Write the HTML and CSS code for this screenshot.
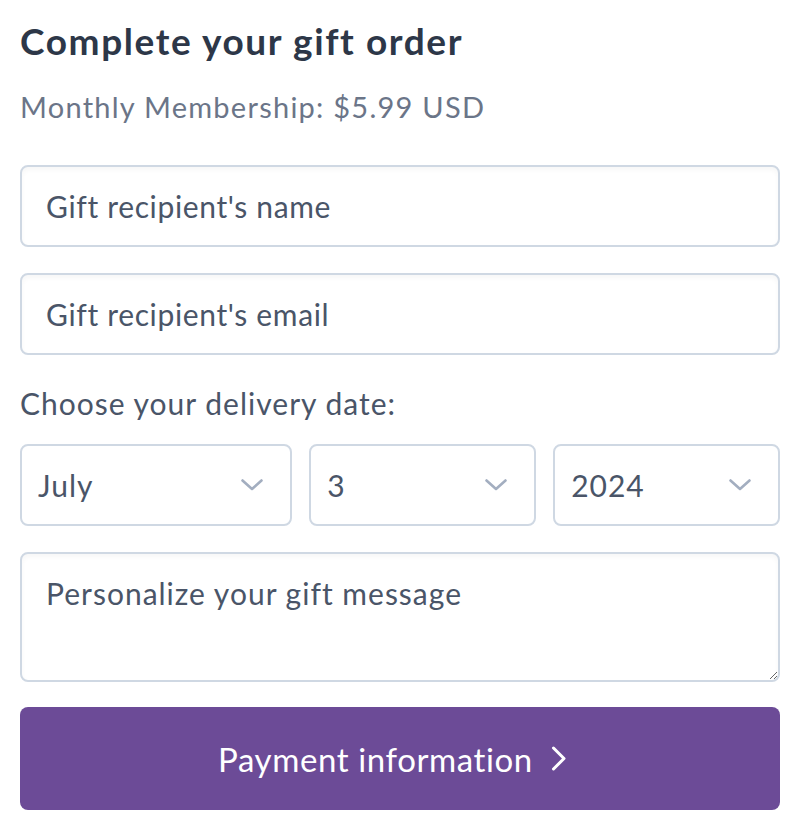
FILE: index.html
```html
<!DOCTYPE html>
<html lang="en">
<head>
<meta charset="utf-8">
<title>Complete your gift order</title>
<link rel="stylesheet" href="styles.css">
</head>
<body>
<form class="gift-form">
  <h1 class="title">Complete your gift order</h1>
  <p class="subtitle">Monthly Membership: $5.99 USD</p>
  <input class="field" type="text" placeholder="Gift recipient's name">
  <input class="field field-gap" type="email" placeholder="Gift recipient's email">
  <p class="label">Choose your delivery date:</p>
  <div class="date-row">
    <div class="select-wrap month">
      <select class="select"><option>July</option></select>
      <svg class="chev" width="22" height="12" viewBox="0 0 22 12"><polyline points="1.5,1.5 11,10 20.5,1.5" fill="none" stroke="#a3aec0" stroke-width="2.6" stroke-linecap="round" stroke-linejoin="round"/></svg>
    </div>
    <div class="select-wrap">
      <select class="select"><option>3</option></select>
      <svg class="chev" width="22" height="12" viewBox="0 0 22 12"><polyline points="1.5,1.5 11,10 20.5,1.5" fill="none" stroke="#a3aec0" stroke-width="2.6" stroke-linecap="round" stroke-linejoin="round"/></svg>
    </div>
    <div class="select-wrap">
      <select class="select"><option>2024</option></select>
      <svg class="chev" width="22" height="12" viewBox="0 0 22 12"><polyline points="1.5,1.5 11,10 20.5,1.5" fill="none" stroke="#a3aec0" stroke-width="2.6" stroke-linecap="round" stroke-linejoin="round"/></svg>
    </div>
  </div>
  <textarea class="message" placeholder="Personalize your gift message"></textarea>
  <button class="pay" type="button">
    <span>Payment information</span>
    <svg width="16" height="25" viewBox="0 0 16 25"><polyline points="2.5,2 13,12.5 2.5,23" fill="none" stroke="#ffffff" stroke-width="3" stroke-linecap="round" stroke-linejoin="round"/></svg>
  </button>
</form>
</body>
</html>
```
FILE: styles.css
```css
* { box-sizing: border-box; }

html, body {
  margin: 0;
  padding: 0;
  background: #ffffff;
}

body {
  font-family: Lato, "Liberation Sans", sans-serif;
  color: #4a5568;
}

.gift-form {
  width: 802px;
  padding: 19px 22px 0 20px;
  display: flex;
  flex-direction: column;
}

.title {
  margin: 0;
  font-size: 37px;
  line-height: 44px;
  font-weight: 700;
  color: #2d3748;
  letter-spacing: 1.6px;
}

.subtitle {
  margin: 26px 0 0;
  font-size: 29px;
  line-height: 36px;
  color: #6b7588;
  letter-spacing: 1.25px;
}

.field,
.select,
.message {
  font-family: Lato, "Liberation Sans", sans-serif;
  font-size: 30px;
  letter-spacing: 1px;
  color: #4a5568;
  background: #ffffff;
  border: 2px solid #cfd8e3;
  border-radius: 8px;
  box-shadow: inset 0 3px 5px rgba(0, 0, 0, 0.035);
  outline: none;
  margin: 0;
}

.field {
  margin-top: 40px;
  width: 100%;
  height: 82px;
  padding: 0 24px;
  letter-spacing: 0.65px;
}

.field.field-gap { margin-top: 26px; }

.field::placeholder,
.message::placeholder {
  color: #4a5568;
  opacity: 1;
}

.label {
  margin: 30px 0 0;
  font-size: 30px;
  line-height: 36px;
  letter-spacing: 1px;
  color: #4a5568;
}

.date-row {
  margin-top: 23px;
  display: grid;
  grid-template-columns: 6fr 5fr 5fr;
  gap: 17px;
}

.select-wrap {
  position: relative;
}

.select {
  -webkit-appearance: none;
  appearance: none;
  width: 100%;
  height: 82px;
  padding: 0 16px;
  box-shadow: none;
}

.chev {
  position: absolute;
  right: 29px;
  top: 35px;
  pointer-events: none;
}

.message {
  margin-top: 26px;
  width: 100%;
  height: 130px;
  padding: 21px 24px;
  resize: vertical;
  display: block;
  line-height: 36px;
}

.pay {
  margin-top: 25px;
  width: 100%;
  height: 103px;
  border: none;
  border-radius: 8px;
  background: #6c4b97;
  color: #ffffff;
  font-family: Lato, "Liberation Sans", sans-serif;
  font-size: 33px;
  letter-spacing: 0.6px;
  display: flex;
  align-items: center;
  justify-content: center;
  gap: 18px;
  padding: 0 15px 0 0;
}
```
